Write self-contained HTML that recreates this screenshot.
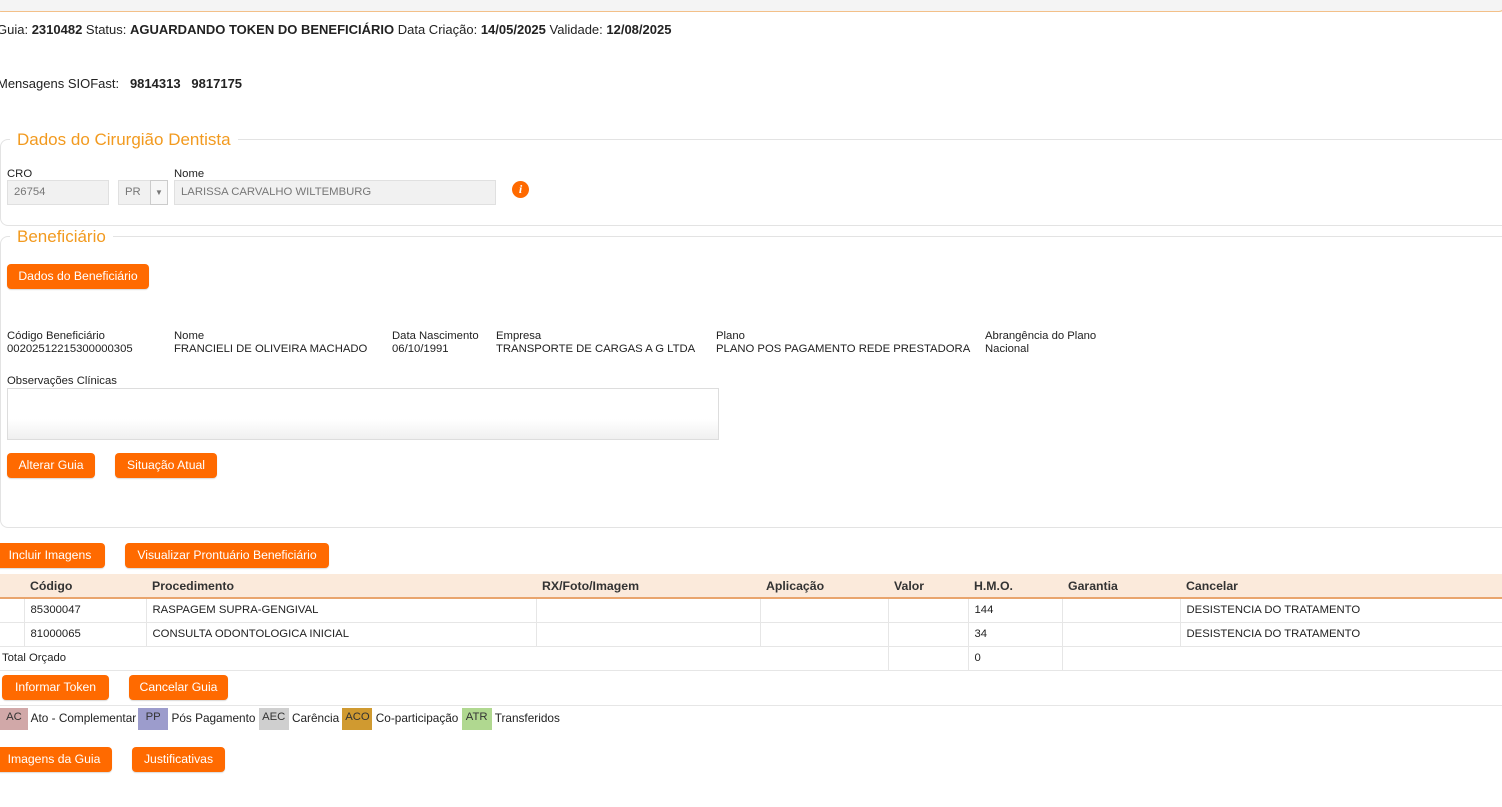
<!DOCTYPE html>
<html><head><meta charset="utf-8"><style>
*{margin:0;padding:0;box-sizing:border-box}
body{width:1502px;height:807px;position:relative;background:#fff;font-family:"Liberation Sans",Tahoma,sans-serif;font-size:11.3px;color:#222;overflow:hidden}
.a{position:absolute;white-space:nowrap}
.btn{position:absolute;background:#ff6a00;color:#fff;font-size:12.2px;border-radius:4px;height:25px;line-height:25px;text-align:center;box-shadow:0 1px 1px rgba(0,0,0,.15)}
.leg{font-size:17px;color:#f29a1f}
.fs{position:absolute;border:1px solid #e3e3e3;border-right:none;border-radius:8px 0 0 8px}
.inp{position:absolute;background:#f1f1f1;border:1px solid #e0e0e0;color:#777;font-size:11.3px;line-height:23px;padding-left:6px;height:25px}
table{position:absolute;border-collapse:collapse;font-size:11.3px}
td,th{border-left:1px solid #e6e6e6;border-bottom:1px solid #e6e6e6;height:24px;padding-left:6px;text-align:left}
th{background:#fbeadb;font-weight:bold;color:#333;border-bottom:2px solid #e9a56d;border-left:none;height:24px;font-size:12.3px}
.tag{display:inline-block;height:22px;line-height:18px;width:30px;text-align:center;vertical-align:middle;font-size:11.3px;color:#333}
</style></head><body>
<div class="a" style="left:-5px;top:-10px;width:1510px;height:22px;background:#f4f4f4;border:1px solid #f3c089;border-radius:0 0 6px 6px"></div>
<div class="a" style="left:-3px;top:22px;font-size:13px">Guia: <b>2310482</b> Status: <b>AGUARDANDO TOKEN DO BENEFICIÁRIO</b> Data Criação: <b>14/05/2025</b> Validade: <b>12/08/2025</b></div>
<div class="a" style="left:-3px;top:76px;font-size:13px">Mensagens SIOFast:&nbsp;&nbsp; <b>9814313</b>&nbsp;&nbsp; <b>9817175</b></div>

<div class="fs" style="left:0;top:139px;width:1510px;height:87px"></div>
<div class="a leg" style="left:10px;top:130px;background:#fff;padding:0 7px">Dados do Cirurgião Dentista</div>
<div class="a" style="left:7px;top:168px">CRO</div>
<div class="a" style="left:174px;top:168px">Nome</div>
<div class="inp" style="left:7px;top:180px;width:102px">26754</div>
<div class="inp" style="left:118px;top:180px;width:50px">PR</div>
<div class="a" style="left:150px;top:180px;width:18px;height:25px;border:1px solid #ccc;background:#f7f7f7;color:#777;text-align:center;line-height:23px;font-size:8px">▼</div>
<div class="inp" style="left:174px;top:180px;width:322px">LARISSA CARVALHO WILTEMBURG</div>
<div class="a" style="left:512px;top:181px;width:17px;height:17px;border-radius:50%;background:#ff6a00;color:#fff;font:italic bold 12px 'Liberation Serif',serif;text-align:center;line-height:17px">i</div>

<div class="fs" style="left:0;top:236px;width:1510px;height:292px"></div>
<div class="a leg" style="left:10px;top:227px;background:#fff;padding:0 7px">Beneficiário</div>
<div class="btn" style="left:7px;top:264px;width:142px">Dados do Beneficiário</div>
<div class="a" style="left:7px;top:330px;line-height:13px">Código Beneficiário<br>00202512215300000305</div>
<div class="a" style="left:174px;top:330px;line-height:13px">Nome<br>FRANCIELI DE OLIVEIRA MACHADO</div>
<div class="a" style="left:392px;top:330px;line-height:13px">Data Nascimento<br>06/10/1991</div>
<div class="a" style="left:496px;top:330px;line-height:13px">Empresa<br>TRANSPORTE DE CARGAS A G LTDA</div>
<div class="a" style="left:716px;top:330px;line-height:13px">Plano<br>PLANO POS PAGAMENTO REDE PRESTADORA</div>
<div class="a" style="left:985px;top:330px;line-height:13px">Abrangência do Plano<br>Nacional</div>
<div class="a" style="left:7px;top:375px">Observações Clínicas</div>
<div class="a" style="left:7px;top:388px;width:712px;height:52px;border:1px solid #ddd;background:linear-gradient(#fff 60%,#f0f0f0)"></div>
<div class="btn" style="left:7px;top:453px;width:88px">Alterar Guia</div>
<div class="btn" style="left:115px;top:453px;width:102px">Situação Atual</div>

<div class="btn" style="left:-5px;top:543px;width:110px">Incluir Imagens</div>
<div class="btn" style="left:125px;top:543px;width:204px">Visualizar Prontuário Beneficiário</div>

<table style="left:0;top:574px;width:1502px">
<tr><th style="width:24px"></th><th style="width:122px">Código</th><th style="width:390px">Procedimento</th><th style="width:224px">RX/Foto/Imagem</th><th style="width:128px">Aplicação</th><th style="width:80px">Valor</th><th style="width:94px">H.M.O.</th><th style="width:118px">Garantia</th><th>Cancelar</th></tr>
<tr><td style="border-left:none"></td><td>85300047</td><td>RASPAGEM SUPRA-GENGIVAL</td><td></td><td></td><td></td><td>144</td><td></td><td>DESISTENCIA DO TRATAMENTO</td></tr>
<tr><td style="border-left:none"></td><td>81000065</td><td>CONSULTA ODONTOLOGICA INICIAL</td><td></td><td></td><td></td><td>34</td><td></td><td>DESISTENCIA DO TRATAMENTO</td></tr>
<tr><td colspan="5" style="border-left:none;padding-left:2px">Total Orçado</td><td></td><td>0</td><td colspan="2"></td></tr>
</table>

<div class="btn" style="left:2px;top:675px;width:107px">Informar Token</div>
<div class="btn" style="left:129px;top:675px;width:99px">Cancelar Guia</div>
<div class="a" style="left:0;top:705px;width:1502px;border-top:1px solid #e6e6e6"></div>
<div class="a" style="left:0;top:708px;font-size:11.8px"><span class="tag" style="background:#d1a8a8;width:28px">AC</span> Ato - Complementar<span class="tag" style="background:#9c9ccc;margin-left:2px">PP</span> Pós Pagamento <span class="tag" style="background:#cfcfcf">AEC</span> Carência <span class="tag" style="background:#d09a30">ACO</span> Co-participação <span class="tag" style="background:#b0d890">ATR</span> Transferidos</div>

<div class="btn" style="left:-4px;top:747px;width:116px">Imagens da Guia</div>
<div class="btn" style="left:132px;top:747px;width:93px">Justificativas</div>
</body></html>
